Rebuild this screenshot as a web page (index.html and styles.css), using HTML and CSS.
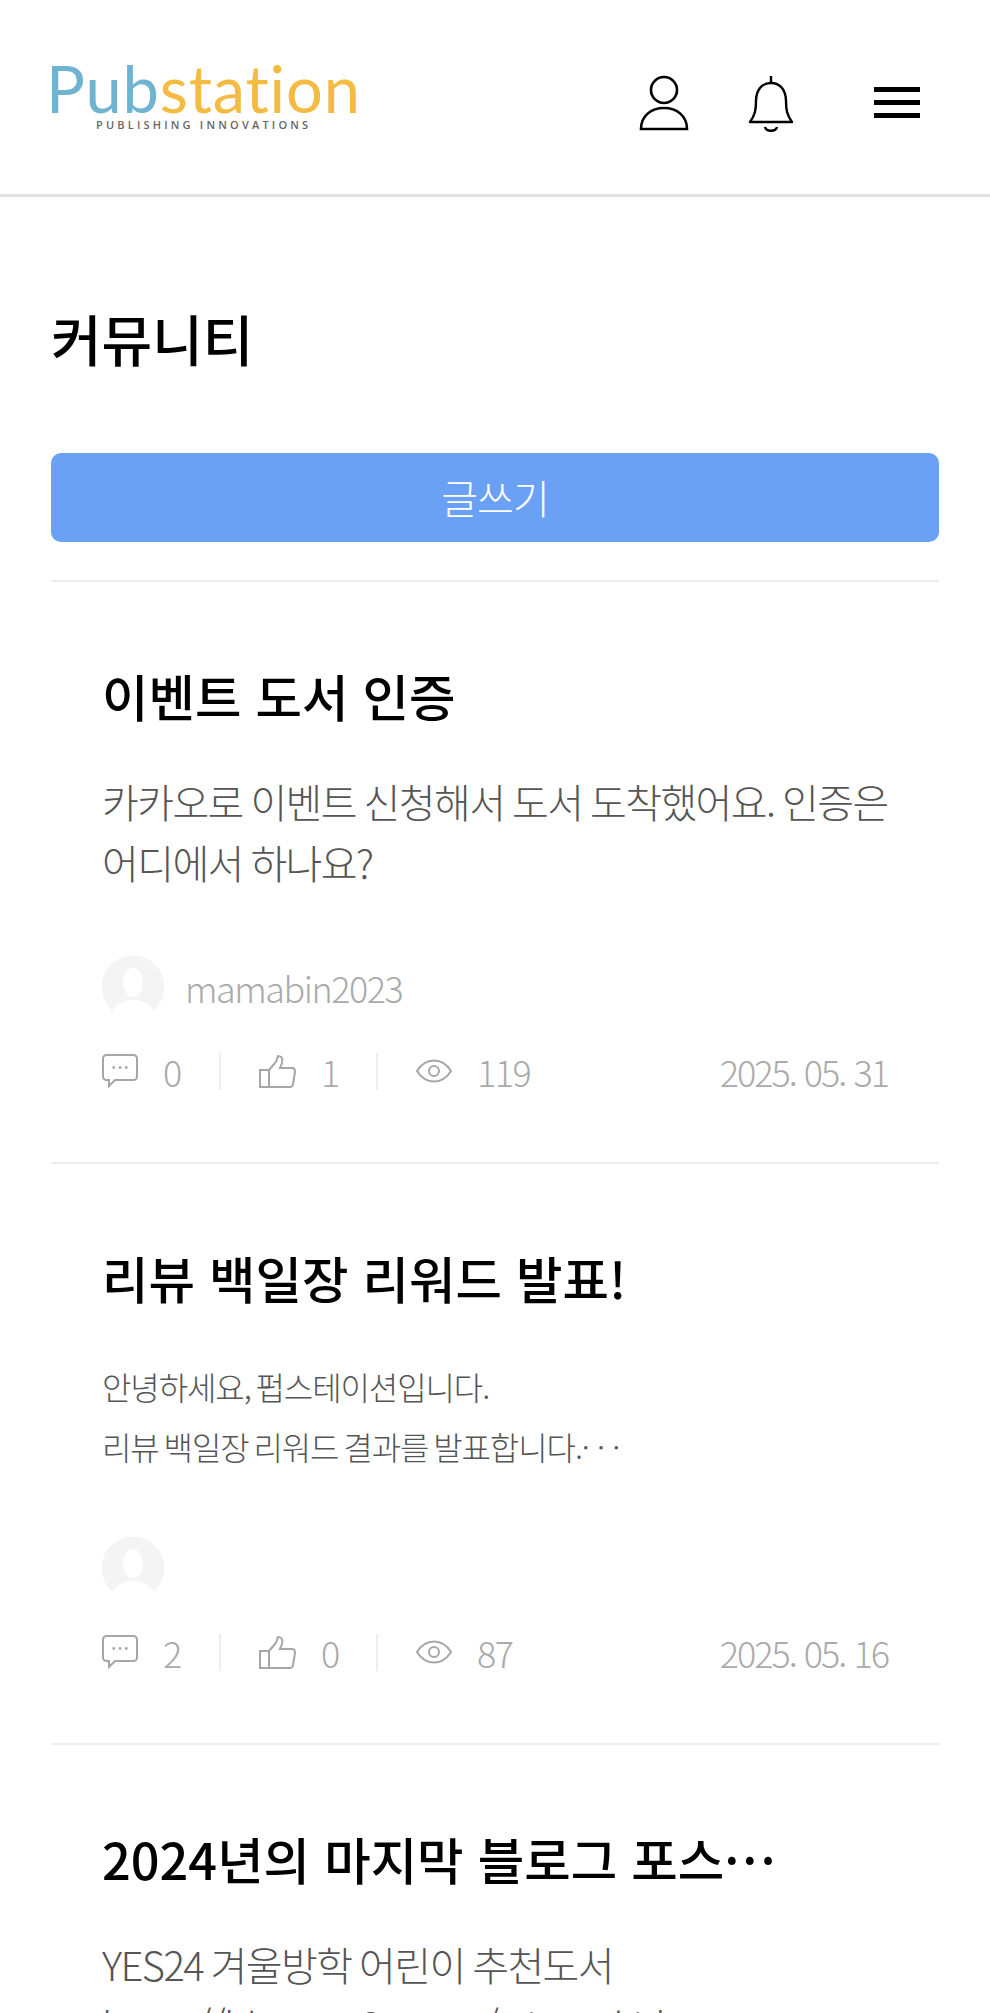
FILE: index.html
```html
<!DOCTYPE html>
<html lang="ko">
<head>
<meta charset="utf-8">
<title>커뮤니티</title>
<link rel="stylesheet" href="styles.css">
</head>
<body>
<svg class="sprite" aria-hidden="true">
  <symbol id="avatar" viewBox="0 0 64 64"><circle cx="32" cy="32" r="31.500" fill="#f4f4f4"/><ellipse cx="32" cy="27.500" rx="10" ry="14.500" fill="#fff"/><path d="M11 56c5-8 13-11 21-11s16 3 21 11a32 32 0 0 1-42 0z" fill="#fff"/></symbol>
  <symbol id="comment" viewBox="0 0 36 34"><g fill="none" stroke="#a6a6a6" stroke-width="2"><path d="M4.500 1h27a3.500 3.500 0 0 1 3.500 3.500v18a3.500 3.500 0 0 1-3.500 3.500H13l-6 6v-6H4.500A3.500 3.500 0 0 1 1 22.500v-18A3.500 3.500 0 0 1 4.500 1z"/><path d="M10.500 13.500h2.500M16.800 13.500h2.500M23 13.500h2.500" stroke-width="2.600"/></g></symbol>
  <symbol id="like" viewBox="0 0 37 33"><g fill="none" stroke="#a6a6a6" stroke-width="2"><path d="M1 15h9v17H1z"/><path d="M10 15l6-7c2-2 2-5 3-7 4 0 5 3 4 7l-2 5h12c2 0 3 2 3 4l-2 12c0 2-2 3-3 3H10"/></g></symbol>
  <symbol id="eye" viewBox="0 0 36 24"><g fill="none" stroke="#a6a6a6" stroke-width="2"><path d="M1 12c4-6.500 10-10.500 17-10.500S31 5.500 35 12c-4 6.500-10 10.500-17 10.500S5 18.500 1 12z"/><circle cx="18" cy="12" r="5"/></g></symbol>
</svg>
<div class="page">
  <header class="header">
    <div class="logo">
      <div class="logo-word"><span class="logo-pub">Pub</span><span class="logo-station">station</span></div>
      <div class="logo-sub">PUBLISHING INNOVATIONS</div>
    </div>
    <div class="header-icons">
      <svg class="ico-user" viewBox="0 0 50 56" fill="none" stroke="#000" stroke-width="2.600"><circle cx="25" cy="15" r="13"/><path d="M2 54c0-13 10-21 23-21s23 8 23 21z"/></svg>
      <svg class="ico-bell" viewBox="0 0 46 58" fill="none" stroke="#000" stroke-width="2.400"><path d="M23 1v7"/><path d="M23 8c-10 0-15 8-15 18 0 9-1 14-6 21h42c-5-7-6-12-6-21 0-10-5-18-15-18z" stroke-linejoin="round"/><path d="M17 52c1 5 11 5 12 0"/></svg>
      <div class="ico-menu"><span></span><span></span><span></span></div>
    </div>
  </header>
  <main class="main">
    <h1 class="page-title">커뮤니티</h1>
    <a class="write-btn">글쓰기</a>
    <article class="post">
      <h2 class="post-title">이벤트 도서 인증</h2>
      <p class="post-body">카카오로 이벤트 신청해서 도서 도착했어요. 인증은<br>어디에서 하나요?</p>
      <div class="author">
        <svg class="avatar"><use href="#avatar"/></svg>
        <span class="author-name">mamabin2023</span>
      </div>
      <div class="stats">
        <span class="stat stat-comment"><svg class="ico-comment"><use href="#comment"/></svg><span class="stat-num">0</span></span>
        <span class="stat stat-like"><svg class="ico-like"><use href="#like"/></svg><span class="stat-num">1</span></span>
        <span class="stat stat-view"><svg class="ico-eye"><use href="#eye"/></svg><span class="stat-num">119</span></span>
        <span class="date">2025. 05. 31</span>
      </div>
    </article>
    <article class="post">
      <h2 class="post-title">리뷰 백일장 리워드 발표!</h2>
      <p class="post-body post-body-small">안녕하세요, 펍스테이션입니다.<br>리뷰 백일장 리워드 결과를 발표합니다.<span class="dots">···</span></p>
      <div class="author">
        <svg class="avatar"><use href="#avatar"/></svg>
      </div>
      <div class="stats">
        <span class="stat stat-comment"><svg class="ico-comment"><use href="#comment"/></svg><span class="stat-num">2</span></span>
        <span class="stat stat-like"><svg class="ico-like"><use href="#like"/></svg><span class="stat-num">0</span></span>
        <span class="stat stat-view"><svg class="ico-eye"><use href="#eye"/></svg><span class="stat-num">87</span></span>
        <span class="date">2025. 05. 16</span>
      </div>
    </article>
    <article class="post">
      <h2 class="post-title">2024년의 마지막 블로그 포스<span class="dots">···</span></h2>
      <p class="post-body">YES24 겨울방학 어린이 추천도서<br>https://blog.yes24.com/winter-kids</p>
    </article>
  </main>
</div>
</body>
</html>
```
FILE: styles.css
```css
* { box-sizing: border-box; }
html, body { margin: 0; padding: 0; background: #fff; }
body { font-family: "Noto Sans CJK KR", "Noto Sans", sans-serif; }
.sprite { display: none; }
.page { width: 990px; height: 2013px; overflow: hidden; }

.header {
  height: 197px;
  border-bottom: 3px solid #e2e2e2;
  display: flex;
  justify-content: space-between;
  padding: 59px 51px 0 51px;
}
.logo { width: 306px; }
.logo-word {
  font-family: "Lato", sans-serif;
  font-weight: 400;
  font-size: 65px;
  line-height: 58px;
  height: 60px;
  white-space: nowrap;
  letter-spacing: 0.800px;
  margin-left: -5px;
}
.logo-pub { color: #6fb3d0; }
.logo-station { color: #f3bb42; }
.logo-sub {
  font-family: "Open Sans", sans-serif;
  font-weight: 600;
  font-size: 11px;
  line-height: 12px;
  letter-spacing: 3.200px;
  color: #666;
  margin-left: 45px;
  white-space: nowrap;
}
.header-icons { display: flex; align-items: flex-start; padding: 16px 19px 0 0; }
.ico-user { width: 50px; height: 56px; display: block; }
.ico-bell { width: 46px; height: 58px; display: block; margin-left: 59px; }
.ico-menu { width: 46px; margin-left: 80px; margin-top: 12px; display: flex; flex-direction: column; gap: 8px; }
.ico-menu span { display: block; height: 5px; background: #000; }

.main { padding: 0 51px; }
.page-title {
  margin: 0;
  padding-top: 107px;
  font-size: 55px;
  line-height: 66px;
  font-weight: 500;
  color: #000;
}
.write-btn {
  display: block;
  margin-top: 83px;
  height: 89px;
  line-height: 89px;
  background: #6ba1f5;
  border-radius: 10px;
  color: #fff;
  font-size: 40px;
  font-weight: 300;
  text-align: center;
  letter-spacing: -1px;
}
.post {
  border-top: 2px solid #eee;
  padding: 0 51px 71px;
}
.write-btn + .post { margin-top: 38px; }
.post-title {
  margin: 0;
  padding-top: 80px;
  font-size: 50.500px;
  line-height: 66px;
  font-weight: 500;
  color: #000;
  white-space: nowrap;
}
.post-body {
  margin: 43px 0 0;
  font-size: 40px;
  line-height: 61px;
  font-weight: 300;
  color: #555;
  letter-spacing: -1.600px;
  word-spacing: -2px;
  white-space: nowrap;
}
.post-body-small {
  margin: 46px 0 -2px;
  font-size: 32px;
  line-height: 60px;
  letter-spacing: -1.100px;
  word-spacing: -3px;
}
.dots { letter-spacing: 0.060em; }
.post-body-small .dots { letter-spacing: 0.225em; }
.author { display: flex; align-items: center; margin-top: 62px; }
.avatar { width: 64px; height: 64px; display: block; margin-left: -1px; }
.author-name { font-size: 36px; line-height: 64px; font-weight: 300; color: #aaa; letter-spacing: -1.500px; margin-left: 20px; }
.stats { display: flex; align-items: center; margin-top: 32px; font-size: 36px; line-height: 40px; font-weight: 300; color: #aaa; }
.stat { display: flex; align-items: center; height: 37px; }
.stat-comment { width: 119px; border-right: 2px solid #eee; }
.stat-like { width: 157px; padding-left: 38px; border-right: 2px solid #eee; }
.stat-view { padding-left: 38px; }
.stat-num { margin-left: 25px; letter-spacing: -1.500px; }
.ico-comment { width: 36px; height: 34px; display: block; }
.ico-like { width: 37px; height: 33px; display: block; }
.ico-eye { width: 36px; height: 24px; display: block; }
.date { margin-left: auto; letter-spacing: -2px; }
```
